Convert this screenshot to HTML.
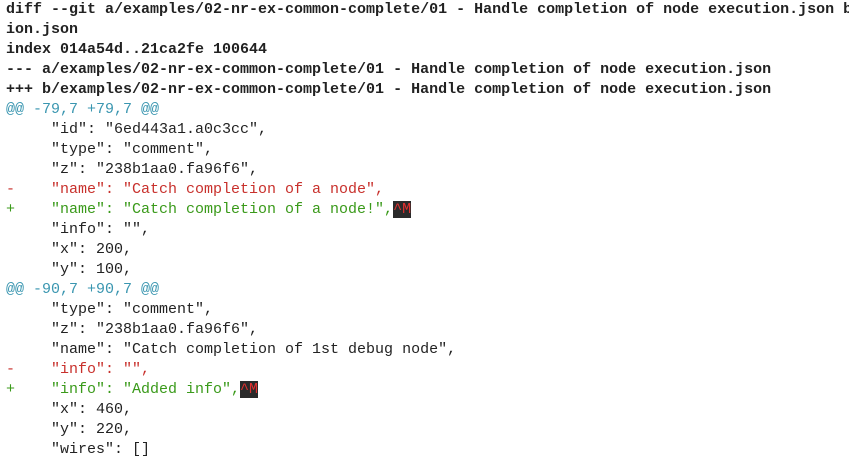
<!DOCTYPE html>
<html><head><meta charset="utf-8"><style>
html,body{margin:0;padding:0;background:#fff;width:849px;height:475px;overflow:hidden}
pre{margin:0;padding:0 0 0 6px;font-family:"Liberation Mono","DejaVu Sans Mono",monospace;font-size:15px;line-height:20px;color:#222;white-space:pre}
.b{font-weight:bold}
.h{color:#3a96b0}
.r{color:#c8302c}
.g{color:#3a9a1a}
.m{background:#2a2a2a;color:#e03030}
</style></head><body><pre><span class="b">diff --git a/examples/02-nr-ex-common-complete/01 - Handle completion of node execution.json b
ion.json
index 014a54d..21ca2fe 100644
--- a/examples/02-nr-ex-common-complete/01 - Handle completion of node execution.json
+++ b/examples/02-nr-ex-common-complete/01 - Handle completion of node execution.json</span>
<span class="h">@@ -79,7 +79,7 @@</span>
     "id": "6ed443a1.a0c3cc",
     "type": "comment",
     "z": "238b1aa0.fa96f6",
<span class="r">-    "name": "Catch completion of a node",</span>
<span class="g">+    "name": "Catch completion of a node!",</span><span class="m">^M</span>
     "info": "",
     "x": 200,
     "y": 100,
<span class="h">@@ -90,7 +90,7 @@</span>
     "type": "comment",
     "z": "238b1aa0.fa96f6",
     "name": "Catch completion of 1st debug node",
<span class="r">-    "info": "",</span>
<span class="g">+    "info": "Added info",</span><span class="m">^M</span>
     "x": 460,
     "y": 220,
     "wires": []
</pre></body></html>
